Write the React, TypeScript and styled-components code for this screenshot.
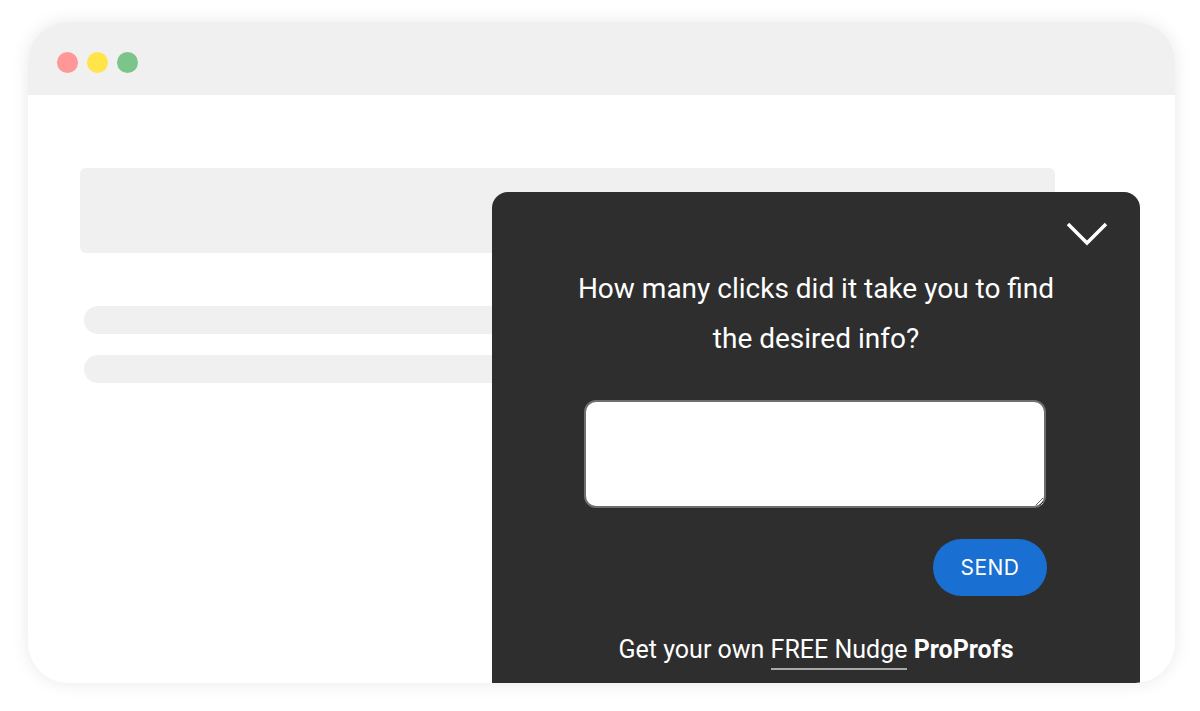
import React from "react";
import styled, { createGlobalStyle } from "styled-components";

const GlobalStyle = createGlobalStyle`
  html, body {
    margin: 0;
    padding: 0;
    background: #ffffff;
    font-family: Roboto, "Liberation Sans", sans-serif;
  }
`;

const Page = styled.div`
  width: 1200px;
  height: 711px;
  padding: 22px 25px 28px 28px;
  box-sizing: border-box;
`;

const BrowserFrame = styled.div`
  position: relative;
  width: 1147px;
  height: 661px;
  border-radius: 40px;
  background: #ffffff;
  overflow: hidden;
  box-shadow: 0 0 18px rgba(0, 0, 0, 0.09);
  display: flex;
  flex-direction: column;
`;

const TitleBar = styled.div`
  height: 73px;
  box-sizing: border-box;
  flex-shrink: 0;
  background: #f0f0f0;
  display: flex;
  align-items: center;
  gap: 9px;
  padding: 7px 0 0 29px;
`;

const Dot = styled.span<{ $color: string }>`
  width: 21px;
  height: 21px;
  border-radius: 50%;
  background: ${(p) => p.$color};
`;

const Content = styled.div`
  flex: 1;
  padding: 73px 120px 0 52px;
  display: flex;
  flex-direction: column;
`;

const Banner = styled.div`
  height: 85px;
  border-radius: 6px;
  background: #f0f0f0;
`;

const Lines = styled.div`
  display: flex;
  flex-direction: column;
  gap: 21px;
  margin: 53px 0 0 4px;
`;

const Line = styled.div`
  height: 28px;
  border-radius: 14px;
  background: #f0f0f0;
`;

const Widget = styled.div`
  position: absolute;
  left: 464px;
  top: 170px;
  width: 648px;
  height: 520px;
  background: #2e2e2e;
  border-radius: 16px 16px 0 0;
  display: flex;
  flex-direction: column;
  align-items: center;
  color: #ffffff;
`;

const CloseRow = styled.div`
  align-self: stretch;
  display: flex;
  justify-content: flex-end;
  padding: 30px 32px 0 0;
  height: 24px;
`;

const Question = styled.p`
  margin: 18px 0 0;
  width: 490px;
  text-align: center;
  font-size: 28px;
  line-height: 50px;
  font-weight: 400;
`;

const Answer = styled.textarea`
  margin: 36px 3px 0 0;
  width: 462px;
  height: 108px;
  box-sizing: border-box;
  border: 2px solid #6e6e6e;
  border-radius: 12px;
  background: #ffffff;
  font-family: inherit;
  font-size: 16px;
  padding: 10px 14px;
  outline: none;
`;

const Actions = styled.div`
  width: 462px;
  display: flex;
  justify-content: flex-end;
  margin-top: 31px;
`;

const SendButton = styled.button`
  width: 114px;
  height: 57px;
  border: none;
  border-radius: 29px;
  background: #1a6fd3;
  color: #ffffff;
  font-family: Inter, Roboto, sans-serif;
  font-size: 21px;
  letter-spacing: 0.5px;
`;

const Footer = styled.div`
  margin-top: 39px;
  font-size: 25px;
  line-height: 30px;
  white-space: nowrap;
`;

const FooterLink = styled.span`
  display: inline-block;
  padding-bottom: 4px;
  border-bottom: 2px solid #a8a8a8;
  line-height: 28px;
`;

const Brand = styled.strong`
  font-weight: 700;
`;

const Chevron = () => (
  <svg width="42" height="24" viewBox="0 0 42 24">
    <polyline
      points="2,2 21,21 40,2"
      fill="none"
      stroke="#ffffff"
      strokeWidth="3.5"
      strokeLinecap="butt"
      strokeLinejoin="miter"
    />
  </svg>
);

export default function App() {
  return (
    <>
      <GlobalStyle />
      <Page>
        <BrowserFrame>
          <TitleBar>
            <Dot $color="#ff9697" />
            <Dot $color="#ffe44a" />
            <Dot $color="#7cc58a" />
          </TitleBar>
          <Content>
            <Banner />
            <Lines>
              <Line />
              <Line />
            </Lines>
          </Content>
          <Widget>
            <CloseRow>
              <Chevron />
            </CloseRow>
            <Question>How many clicks did it take you to find the desired info?</Question>
            <Answer />
            <Actions>
              <SendButton>SEND</SendButton>
            </Actions>
            <Footer>
              Get your own <FooterLink>FREE Nudge</FooterLink> <Brand>ProProfs</Brand>
            </Footer>
          </Widget>
        </BrowserFrame>
      </Page>
    </>
  );
}
